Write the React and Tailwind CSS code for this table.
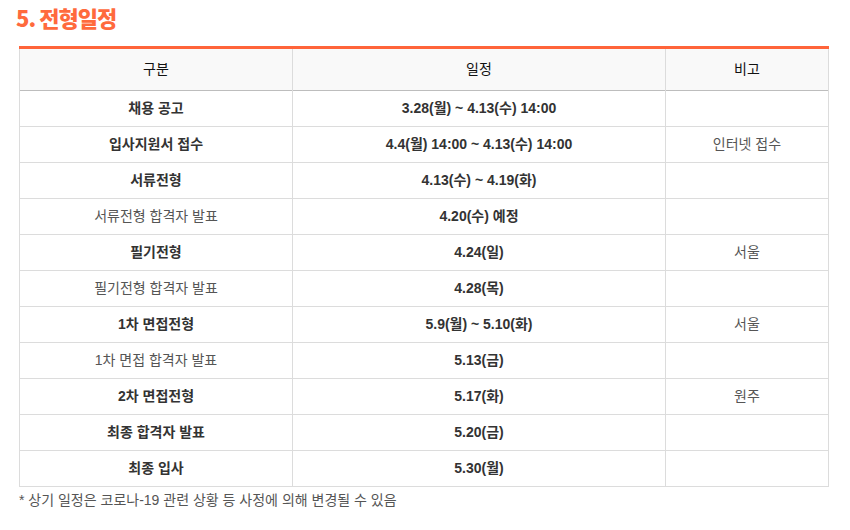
import React from "react";

const rows = [
  { name: "채용 공고", date: "3.28(월) ~ 4.13(수) 14:00", note: "", bold: true },
  { name: "입사지원서 접수", date: "4.4(월) 14:00 ~ 4.13(수) 14:00", note: "인터넷 접수", bold: true },
  { name: "서류전형", date: "4.13(수) ~ 4.19(화)", note: "", bold: true },
  { name: "서류전형 합격자 발표", date: "4.20(수) 예정", note: "", bold: false },
  { name: "필기전형", date: "4.24(일)", note: "서울", bold: true },
  { name: "필기전형 합격자 발표", date: "4.28(목)", note: "", bold: false },
  { name: "1차 면접전형", date: "5.9(월) ~ 5.10(화)", note: "서울", bold: true },
  { name: "1차 면접 합격자 발표", date: "5.13(금)", note: "", bold: false },
  { name: "2차 면접전형", date: "5.17(화)", note: "원주", bold: true },
  { name: "최종 합격자 발표", date: "5.20(금)", note: "", bold: true },
  { name: "최종 입사", date: "5.30(월)", note: "", bold: true },
];

const App = () => {
  return (
    <div
      className="w-[850px] h-[530px] bg-white"
      style={{ fontFamily: '"Liberation Sans", "Noto Sans CJK KR", sans-serif' }}
    >
      <h2
        className="pl-[16px] pt-[4px] h-[46px] text-[22px] font-black leading-[26px] text-[#ff6a3d] tracking-[-1px]"
        style={{ fontFamily: '"Noto Sans CJK KR", sans-serif' }}
      >
        5. 전형일정
      </h2>
      <table className="ml-[19px] w-[810px] border-collapse border-t-[3px] border-t-[#ff643a] text-[14px] text-center">
        <thead>
          <tr className="h-[43px] bg-[#f9f9f9] border-b border-b-[#bdbdbd]">
            <th className="w-[273px] border-x border-[#dcdcdc] font-normal text-[#111]">구분</th>
            <th className="w-[373px] border-x border-[#dcdcdc] font-normal text-[#111]">일정</th>
            <th className="border-x border-[#dcdcdc] font-normal text-[#111]">비고</th>
          </tr>
        </thead>
        <tbody>
          {rows.map((r) => (
            <tr key={r.name} className="h-[36px] border-b border-[#dcdcdc]">
              <td
                className={
                  r.bold
                    ? "border-x border-[#dcdcdc] font-bold text-[#333]"
                    : "border-x border-[#dcdcdc] font-normal text-[#555]"
                }
              >
                {r.name}
              </td>
              <td className="border-x border-[#dcdcdc] font-bold text-[#333]">{r.date}</td>
              <td className="border-x border-[#dcdcdc] text-[#555]">{r.note}</td>
            </tr>
          ))}
        </tbody>
      </table>
      <p className="pl-[19px] pt-[3px] text-[14px] text-[#555]">
        * 상기 일정은 코로나-19 관련 상황 등 사정에 의해 변경될 수 있음
      </p>
    </div>
  );
};

export default App;
